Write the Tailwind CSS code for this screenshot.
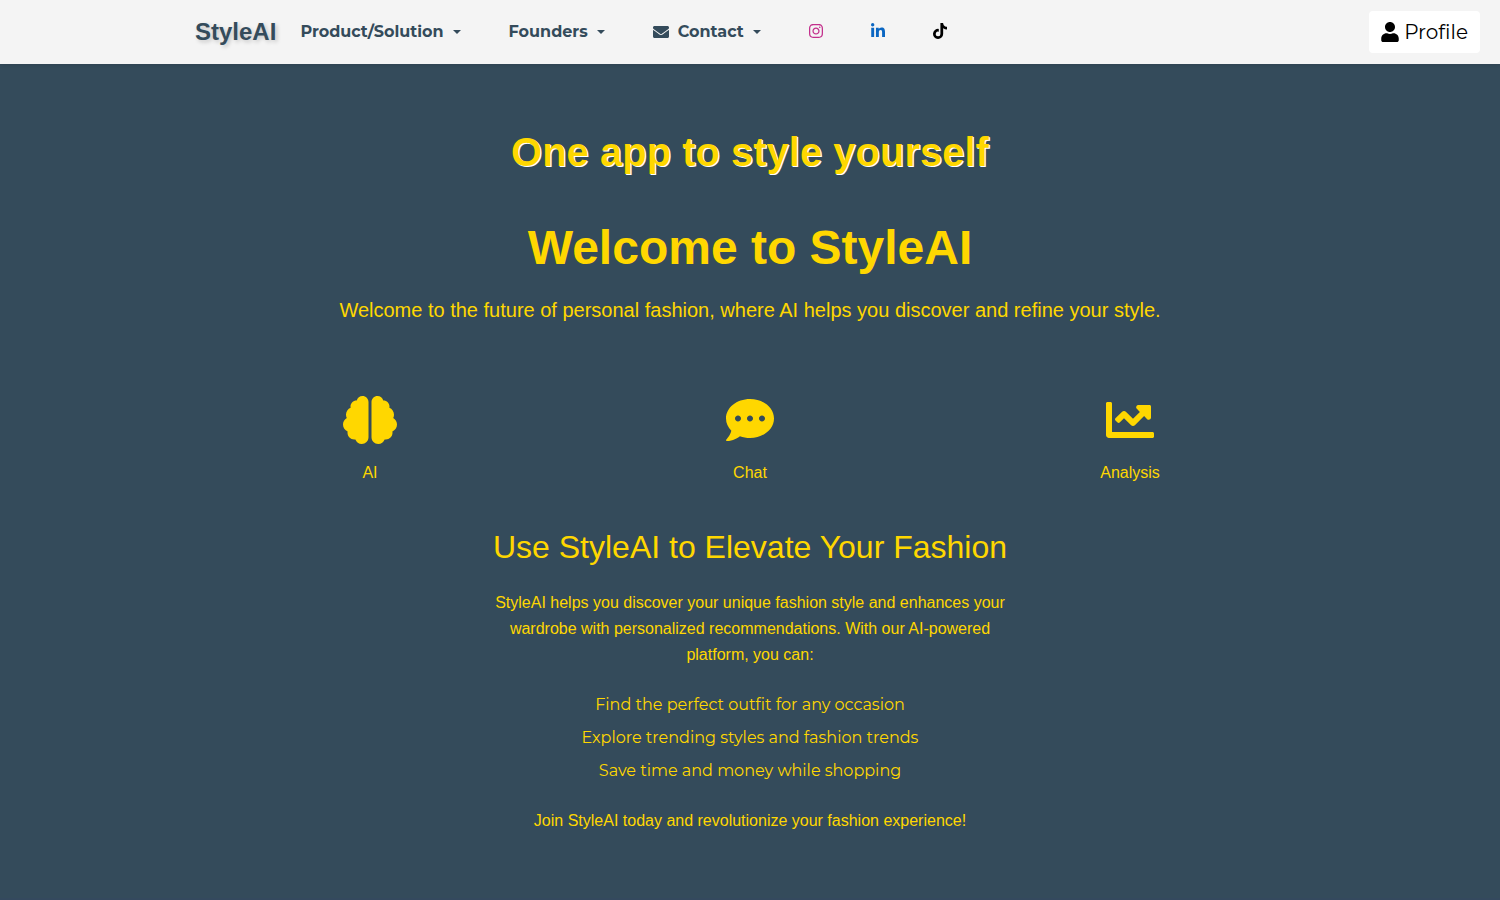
<!DOCTYPE html>
<html lang="en">
<head>
<meta charset="utf-8">
<meta name="viewport" content="width=device-width, initial-scale=1">
<title>StyleAI</title>
<script src="https://cdn.jsdelivr.net/npm/@tailwindcss/browser@4"></script>
</head>
<body class="flex min-h-screen flex-col bg-[#344b5b] font-['Liberation_Sans',Arial,sans-serif] text-[#ffd700]">
<header class="relative flex h-16 items-center bg-[#f4f4f4] pr-5 pl-[13%] text-[#344b5b] shadow-[0_2px_4px_rgba(0,0,0,0.1)]">
  <a href="#" class="mr-6 text-2xl font-bold [text-shadow:2px_2px_4px_rgba(0,0,0,0.2)]">StyleAI</a>
  <nav class="flex items-center gap-12 font-['Montserrat','Inter',sans-serif] text-base font-bold" aria-label="Main">
    <button type="button" class="flex items-center gap-[9px]">Product/Solution <span class="border-x-4 border-t-4 border-x-transparent border-t-current"></span></button>
    <button type="button" class="flex items-center gap-[9px]">Founders <span class="border-x-4 border-t-4 border-x-transparent border-t-current"></span></button>
    <button type="button" class="flex items-center gap-[9px]"><svg class="size-4" viewBox="0 0 512 512" fill="currentColor" aria-hidden="true"><path d="M502.3 190.8c3.9-3.1 9.7-.2 9.7 4.7V400c0 26.5-21.5 48-48 48H48c-26.5 0-48-21.5-48-48V195.6c0-5 5.7-7.8 9.7-4.7 22.4 17.4 52.1 39.5 154.1 113.6 21.1 15.4 56.7 47.8 92.2 47.6 35.7.3 72-32.8 92.3-47.6 102-74.1 131.6-96.3 154-113.7zM256 320c23.2.4 56.6-29.2 73.4-41.4 132.7-96.3 142.8-104.7 173.4-128.7 5.8-4.5 9.2-11.5 9.2-18.9v-19c0-26.5-21.5-48-48-48H48c-26.5 0-48 21.5-48 48v19c0 7.4 3.4 14.3 9.2 18.9 30.6 23.9 40.7 32.4 173.4 128.7 16.8 12.2 50.2 41.8 73.4 41.4z"/></svg> Contact <span class="border-x-4 border-t-4 border-x-transparent border-t-current"></span></button>
    <a href="#" aria-label="Instagram" class="pb-0.5 text-[#c32f8c]"><svg class="h-4 w-3.5" viewBox="0 0 448 512" fill="currentColor" aria-hidden="true"><path d="M224.1 141c-63.6 0-114.9 51.3-114.9 114.9s51.3 114.9 114.9 114.9S339 319.5 339 255.9 287.7 141 224.1 141zm0 189.6c-41.1 0-74.7-33.5-74.7-74.7s33.5-74.7 74.7-74.7 74.7 33.5 74.7 74.7-33.6 74.7-74.7 74.7zm146.4-194.3c0 14.9-12 26.8-26.8 26.8-14.9 0-26.8-12-26.8-26.8s12-26.8 26.8-26.8 26.8 12 26.8 26.8zm76.1 27.2c-1.7-35.9-9.9-67.7-36.2-93.9-26.2-26.2-58-34.4-93.9-36.2-37-2.1-147.9-2.1-184.9 0-35.8 1.7-67.6 9.9-93.9 36.1s-34.4 58-36.2 93.9c-2.1 37-2.1 147.9 0 184.9 1.7 35.9 9.9 67.7 36.2 93.9s58 34.4 93.9 36.2c37 2.1 147.9 2.1 184.9 0 35.9-1.7 67.7-9.9 93.9-36.2 26.2-26.2 34.4-58 36.2-93.9 2.1-37 2.1-147.8 0-184.8zM398.8 388c-7.8 19.6-22.9 34.7-42.6 42.6-29.5 11.7-99.5 9-132.1 9s-102.7 2.6-132.1-9c-19.6-7.8-34.7-22.9-42.6-42.6-11.7-29.5-9-99.5-9-132.1s-2.6-102.7 9-132.1c7.8-19.6 22.9-34.7 42.6-42.6 29.5-11.7 99.5-9 132.1-9s102.7-2.6 132.1 9c19.6 7.8 34.7 22.9 42.6 42.6 11.7 29.5 9 99.5 9 132.1s2.7 102.7-9 132.1z"/></svg></a>
    <a href="#" aria-label="LinkedIn" class="pb-0.5 text-[#0a66c2]"><svg class="h-4 w-3.5" viewBox="0 0 448 512" fill="currentColor" aria-hidden="true"><path d="M100.28 448H7.4V148.9h92.88zM53.79 108.1C24.09 108.1 0 83.5 0 53.8a53.79 53.79 0 0 1 107.58 0c0 29.7-24.1 54.3-53.79 54.3zM447.9 448h-92.68V302.4c0-34.7-.7-79.2-48.29-79.2-48.29 0-55.69 37.7-55.69 76.7V448h-92.78V148.9h89.08v40.8h1.3c12.4-23.5 42.69-48.3 87.88-48.3 94 0 111.28 61.9 111.28 142.3V448z"/></svg></a>
    <a href="#" aria-label="TikTok" class="pb-0.5 text-black"><svg class="h-4 w-3.5" viewBox="0 0 448 512" fill="currentColor" aria-hidden="true"><path d="M448 209.91a210.06 210.06 0 0 1-122.77-39.25V349.38A162.55 162.55 0 1 1 185 188.31V278.2a74.62 74.62 0 1 0 52.23 71.18V0h88a121.18 121.18 0 0 0 1.86 22.17A122.18 122.18 0 0 0 381 102.39a121.43 121.43 0 0 0 67 20.14z"/></svg></a>
  </nav>
  <button type="button" class="ml-auto flex items-center gap-[5px] rounded bg-white px-3 py-1.5 font-['Montserrat','Inter',sans-serif] text-xl leading-[30px] text-black"><svg class="h-5 w-[18px]" viewBox="0 0 448 512" fill="currentColor" aria-hidden="true"><path d="M224 256c70.7 0 128-57.3 128-128S294.7 0 224 0 96 57.3 96 128s57.3 128 128 128zm89.6 32h-16.7c-22.2 10.2-46.9 16-72.9 16s-50.6-5.8-72.9-16h-16.7C60.2 288 0 348.2 0 422.4V464c0 26.5 21.5 48 48 48h352c26.5 0 48-21.5 48-48v-41.6c0-74.2-60.2-134.4-134.4-134.4z"/></svg>Profile</button>
</header>
<main class="mx-auto w-full max-w-[1140px] grow pt-16 pb-16 text-center">
  <p class="text-[40px] leading-[48px] font-bold [text-shadow:1px_1px_0_#fff]">One app to style yourself</p>
  <h1 class="mt-11 text-5xl leading-[56px] font-bold">Welcome to StyleAI</h1>
  <p class="mt-[18px] text-xl leading-8">Welcome to the future of personal fashion, where AI helps you discover and refine your style.</p>
  <section class="mt-[70px] grid grid-cols-3 leading-[26px]" aria-label="Features">
    <div class="flex flex-col items-center gap-4"><svg class="h-12 w-[54px]" viewBox="0 0 576 512" fill="currentColor" aria-hidden="true"><path d="M208 0c-29.9 0-54.7 20.5-61.8 48.2-.8 0-1.4-.2-2.2-.2-35.3 0-64 28.7-64 64 0 4.8.6 9.5 1.7 14C52.5 138 32 166.6 32 200c0 12.6 3.2 24.3 8.3 34.9C16.3 248.7 0 274.3 0 304c0 33.3 20.4 61.9 49.4 73.9-.9 4.6-1.4 9.3-1.4 14.1 0 39.8 32.2 72 72 72 4.1 0 8.1-.5 12-1.2 9.6 28.5 36.2 49.2 68 49.2 39.8 0 72-32.2 72-72V64c0-35.3-28.7-64-64-64zm368 304c0-29.7-16.3-55.3-40.3-69.1 5.2-10.6 8.3-22.3 8.3-34.9 0-33.4-20.5-62-49.7-74 1-4.5 1.7-9.2 1.7-14 0-35.3-28.7-64-64-64-.8 0-1.5.2-2.2.2C422.7 20.5 397.9 0 368 0c-35.3 0-64 28.6-64 64v376c0 39.8 32.2 72 72 72 31.8 0 58.4-20.7 68-49.2 3.9.7 7.9 1.2 12 1.2 39.8 0 72-32.2 72-72 0-4.8-.5-9.5-1.4-14.1 29-12 49.4-40.6 49.4-73.9z"/></svg><p>AI</p></div>
    <div class="flex flex-col items-center gap-4"><svg class="size-12" viewBox="0 0 512 512" fill="currentColor" aria-hidden="true"><path d="M256 32C114.6 32 0 125.1 0 240c0 49.6 21.4 95 57 130.7C44.5 421.1 2.7 466 2.2 466.5c-2.2 2.3-2.8 5.7-1.5 8.7S4.8 480 8 480c66.3 0 116-31.8 140.6-51.4 32.7 12.3 69 19.4 107.4 19.4 141.4 0 256-93.1 256-208S397.4 32 256 32zM128 272c-17.7 0-32-14.3-32-32s14.3-32 32-32 32 14.3 32 32-14.3 32-32 32zm128 0c-17.7 0-32-14.3-32-32s14.3-32 32-32 32 14.3 32 32-14.3 32-32 32zm128 0c-17.7 0-32-14.3-32-32s14.3-32 32-32 32 14.3 32 32-14.3 32-32 32z"/></svg><p>Chat</p></div>
    <div class="flex flex-col items-center gap-4"><svg class="size-12" viewBox="0 0 512 512" fill="currentColor" aria-hidden="true"><path d="M496 384H64V80c0-8.84-7.16-16-16-16H16C7.16 64 0 71.16 0 80v336c0 17.67 14.33 32 32 32h464c8.84 0 16-7.16 16-16v-32c0-8.84-7.16-16-16-16zM464 96H345.94c-21.38 0-32.09 25.85-16.97 40.97l32.4 32.4L288 242.75l-73.37-73.37c-12.5-12.5-32.76-12.5-45.25 0l-68.69 68.69c-6.25 6.25-6.25 16.38 0 22.63l22.62 22.62c6.25 6.25 16.38 6.25 22.63 0L192 237.25l73.37 73.37c12.5 12.5 32.76 12.5 45.25 0l96-96 32.4 32.4c15.12 15.12 40.97 4.41 40.97-16.97V112c.01-8.84-7.15-16-15.99-16z"/></svg><p>Analysis</p></div>
  </section>
  <section class="mx-auto mt-10 max-w-[540px] leading-[26px]">
    <h2 class="text-[32px] leading-[42px]">Use StyleAI to Elevate Your Fashion</h2>
    <p class="mt-[22px]">StyleAI helps you discover your unique fashion style and enhances your wardrobe with personalized recommendations. With our AI-powered platform, you can:</p>
    <ul class="mt-6 flex flex-col gap-[7px] font-['Montserrat','Inter',sans-serif]">
      <li>Find the perfect outfit for any occasion</li>
      <li>Explore trending styles and fashion trends</li>
      <li>Save time and money while shopping</li>
    </ul>
    <p class="mt-6">Join StyleAI today and revolutionize your fashion experience!</p>
  </section>
</main>
<footer class="h-0.5 bg-[#34495e]"></footer>
</body>
</html>
